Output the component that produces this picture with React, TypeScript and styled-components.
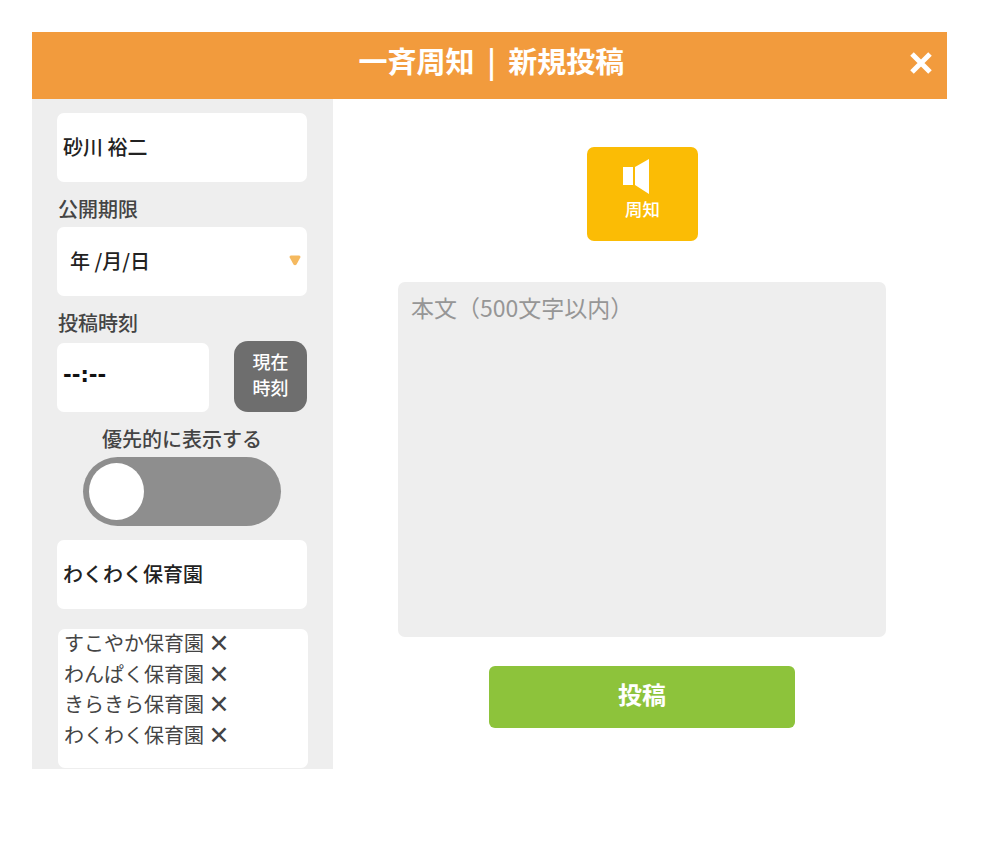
import React from "react";
import styled, { createGlobalStyle } from "styled-components";

const Global = createGlobalStyle`
  html, body { margin: 0; padding: 0; background: #fff; }
  body { font-family: "Noto Sans CJK JP", "Noto Sans", sans-serif; }
`;
const Modal = styled.div`
  width: 915px;
  margin: 32px 0 0 32px;
`;
const Header = styled.header`
  position: relative;
  height: 67px;
  background: #f29b3d;
  display: flex;
  align-items: center;
  justify-content: center;
  color: #fff;
  font-size: 29px;
  font-weight: 700;
  word-spacing: 6px;
  line-height: 40px;
  padding: 0 0 11px 4px;
  box-sizing: border-box;
`;
const Close = styled.svg`
  position: absolute;
  right: 14px;
  top: 20px;
  width: 24px;
  height: 22px;
`;
const Body = styled.div`
  display: flex;
  height: 670px;
`;
const Sidebar = styled.aside`
  width: 301px;
  background: #eeeeee;
  box-sizing: border-box;
  padding: 14px 26px 0 25px;
  display: flex;
  flex-direction: column;
`;
const Field = styled.div<{ $pl?: number }>`
  height: 69px;
  flex: none;
  background: #fff;
  border-radius: 7px;
  box-sizing: border-box;
  padding-left: ${(p) => p.$pl ?? 6}px;
  padding-bottom: 3px;
  display: flex;
  align-items: center;
  position: relative;
  font-size: 20px;
  color: #222;
  font-weight: 500;
`;
const Label = styled.div`
  font-size: 20px;
  line-height: 26px;
  height: 26px;
  margin: 14px 0 5px 1px;
  color: #444;
  font-weight: 500;
`;
const Caret = styled.svg`
  position: absolute;
  right: 6px;
  top: 28px;
  width: 12px;
  height: 11px;
`;
const TimeRow = styled.div`
  display: flex;
  justify-content: space-between;
  align-items: flex-end;
`;
const TimeField = styled(Field)`
  width: 152px;
  padding-bottom: 6px;
  font-family: "DejaVu Sans", sans-serif;
  font-size: 21px;
  font-weight: 700;
  color: #111;
`;
const NowButton = styled.button`
  width: 73px;
  height: 71px;
  border: 0;
  padding: 0 0 6px;
  border-radius: 14px;
  background: #6e6e6e;
  color: #fff;
  font: 500 18px/26px "Noto Sans CJK JP", sans-serif;
`;
const ToggleLabel = styled.div`
  text-align: center;
  font-size: 20px;
  line-height: 26px;
  margin-top: 14px;
  color: #444;
  font-weight: 500;
`;
const Toggle = styled.div`
  width: 198px;
  height: 69px;
  flex: none;
  margin: 5px 0 14px 26px;
  border-radius: 35px;
  background: #8e8e8e;
  display: flex;
  align-items: center;
  padding-left: 6px;
  box-sizing: border-box;
`;
const Knob = styled.div`
  width: 55px;
  height: 57px;
  border-radius: 50%;
  background: #fff;
`;
const TagList = styled.ul`
  list-style: none;
  margin: 20px -1px 0 1px;
  padding: 0 0 0 6px;
  height: 139px;
  flex: none;
  box-sizing: border-box;
  background: #fff;
  border-radius: 7px;
  font-size: 20px;
  color: #444;
`;
const Tag = styled.li`
  height: 30.7px;
  line-height: 28px;
  white-space: nowrap;
`;
const Remove = styled.span`
  font-family: "DejaVu Sans", sans-serif;
  font-size: 25px;
  line-height: 20px;
  vertical-align: -1px;
`;
const Main = styled.main`
  flex: 1;
  display: flex;
  flex-direction: column;
  align-items: center;
  padding-top: 48px;
  padding-left: 4px;
  box-sizing: border-box;
`;
const Kind = styled.button`
  width: 111px;
  height: 94px;
  border: 0;
  padding: 12px 0 0;
  margin-left: 1px;
  border-radius: 7px;
  background: #fbbc05;
  color: #fff;
  display: flex;
  flex-direction: column;
  align-items: center;
  font: 500 17.5px/24px "Noto Sans CJK JP", sans-serif;
  box-sizing: border-box;
  gap: 3px;
`;
const Speaker = styled.svg`
  margin-right: 12px;
  flex: none;
`;
const TextArea = styled.div`
  width: 488px;
  height: 355px;
  margin-top: 41px;
  background: #eeeeee;
  border-radius: 7px;
  padding: 9px 13px;
  box-sizing: border-box;
  color: #969696;
  font-size: 23px;
  line-height: 32px;
`;
const Submit = styled.button`
  width: 306px;
  height: 62px;
  margin-top: 29px;
  border: 0;
  border-radius: 6px;
  background: #8dc33b;
  color: #fff;
  font: 700 24px/30px "Noto Sans CJK JP", sans-serif;
  padding: 0 0 7px;
`;

export default function App() {
  return (
    <>
      <Global />
      <Modal>
        <Header>
          一斉周知 | 新規投稿
          <Close viewBox="0 0 24 22">
            <path d="M3 2 L21 20 M21 2 L3 20" stroke="#fff" strokeWidth="5" fill="none" />
          </Close>
        </Header>
        <Body>
          <Sidebar>
            <Field>砂川 裕二</Field>
            <Label>公開期限</Label>
            <Field $pl={13}>
              年 /月/日
              <Caret viewBox="0 0 12 11">
                <path d="M2 0.5 H10 Q12 0.5 11.3 2.5 L7.5 9.5 Q6 11 4.5 9.5 L0.7 2.5 Q0 0.5 2 0.5 Z" fill="#f5b95f" />
              </Caret>
            </Field>
            <Label>投稿時刻</Label>
            <TimeRow>
              <TimeField>--:--</TimeField>
              <NowButton>
                現在
                <br />
                時刻
              </NowButton>
            </TimeRow>
            <ToggleLabel>優先的に表示する</ToggleLabel>
            <Toggle>
              <Knob />
            </Toggle>
            <Field>わくわく保育園</Field>
            <TagList>
              {["すこやか保育園", "わんぱく保育園", "きらきら保育園", "わくわく保育園"].map((n) => (
                <Tag key={n}>
                  {n} <Remove>✕</Remove>
                </Tag>
              ))}
            </TagList>
          </Sidebar>
          <Main>
            <Kind>
              <Speaker width="27" height="35" viewBox="0 0 27 35">
                <path d="M0 8 H10 V26 H0 Z M12 8 L26 0 V35 L12 26 Z" fill="#fff" />
              </Speaker>
              周知
            </Kind>
            <TextArea>本文（500文字以内）</TextArea>
            <Submit>投稿</Submit>
          </Main>
        </Body>
      </Modal>
    </>
  );
}
